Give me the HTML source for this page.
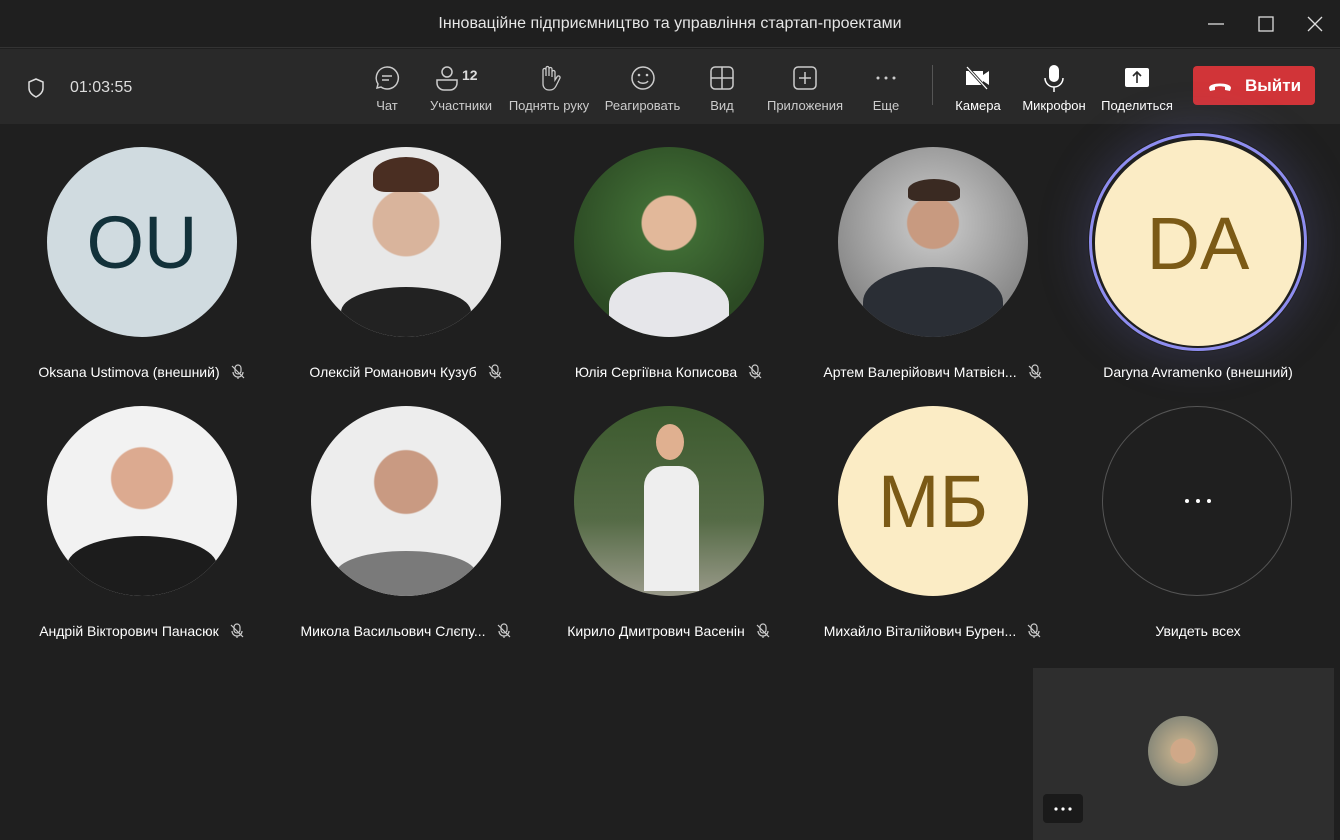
<!DOCTYPE html>
<html><head><meta charset="utf-8"><style>
*{margin:0;padding:0;box-sizing:border-box}
body{width:1340px;height:840px;background:#1f1f1f;font-family:"Liberation Sans",sans-serif;color:#fff;position:relative;overflow:hidden}
.title{position:absolute;top:0;left:0;width:1340px;height:48px;background:#1f1f1f;border-bottom:1px solid #333}
.title .t{position:absolute;left:0;right:0;top:15px;text-align:center;font-size:16px;color:#e6e6e6}
.bar{position:absolute;top:49px;left:0;width:1340px;height:75px;background:#292929}
.btn{position:absolute;top:0;height:75px;text-align:center;font-size:13px;color:#ccc}
.btn svg{position:absolute;top:15px;left:50%;transform:translateX(-50%)}
.btn span{position:absolute;top:49px;left:0;right:0;white-space:nowrap}
.w span{color:#fff}
.c{position:absolute;width:190px;height:190px;border-radius:50%;overflow:hidden}
.ini{display:flex;align-items:center;justify-content:center;font-size:74px;font-family:"Liberation Sans",sans-serif}
.n{position:absolute;width:264px;text-align:center;font-size:14px;color:#fff}
.n svg{vertical-align:-3px;margin-left:10px}
</style></head><body>
<div class="title"><div class="t">Інноваційне підприємництво та управління стартап-проектами</div>
<svg style="position:absolute;left:1207px;top:15px" width="18" height="18"><line x1="1" y1="9" x2="17" y2="9" stroke="#ddd" stroke-width="1.3"/></svg>
<svg style="position:absolute;left:1257px;top:15px" width="18" height="18"><rect x="2" y="2" width="14" height="14" fill="none" stroke="#ddd" stroke-width="1.3"/></svg>
<svg style="position:absolute;left:1306px;top:15px" width="18" height="18"><path d="M2 2L16 16M16 2L2 16" stroke="#ddd" stroke-width="1.3"/></svg>
</div>
<div class="bar">
<svg style="position:absolute;left:26px;top:28px" width="20" height="22"><path d="M10 2L3 5v6c0 4 3 7 7 9 4-2 7-5 7-9V5z" fill="none" stroke="#ddd" stroke-width="1.5"/></svg>
<div style="position:absolute;left:70px;top:30px;font-size:16px;color:#ddd">01:03:55</div>
<div class="btn" style="left:362px;width:50px"><svg width="28" height="28"><path d="M14 3a11 11 0 1 1-6 20l-4 1 1-4A11 11 0 0 1 14 3z" fill="none" stroke="#ccc" stroke-width="1.5"/><path d="M9 12h10M9 16h7" stroke="#ccc" stroke-width="1.5"/></svg><span>Чат</span></div>
<div class="btn" style="left:425px;width:72px"><svg width="50" height="28" style="left:46%"><circle cx="14" cy="8" r="5" fill="none" stroke="#ccc" stroke-width="1.5"/><path d="M4 16h20v3a7 7 0 0 1-7 7h-6a7 7 0 0 1-7-7z" fill="none" stroke="#ccc" stroke-width="1.5"/><text x="29" y="16" fill="#ddd" font-size="14" font-weight="bold" font-family="Liberation Sans">12</text></svg><span>Участники</span></div>
<div class="btn" style="left:505px;width:88px"><svg width="28" height="28"><path d="M8 14V6a1.5 1.5 0 0 1 3 0v6V4a1.5 1.5 0 0 1 3 0v8V5a1.5 1.5 0 0 1 3 0v8V8a1.5 1.5 0 0 1 3 0v8l2-3a1.5 1.5 0 0 1 3 1l-4 8c-1 2-3 4-6 4h-1c-4 0-6-3-6-6z" fill="none" stroke="#ccc" stroke-width="1.3"/></svg><span>Поднять руку</span></div>
<div class="btn" style="left:600px;width:85px"><svg width="28" height="28"><circle cx="14" cy="14" r="11" fill="none" stroke="#ccc" stroke-width="1.5"/><circle cx="10" cy="11" r="1.3" fill="#ccc"/><circle cx="18" cy="11" r="1.3" fill="#ccc"/><path d="M9 17c2 3 8 3 10 0" fill="none" stroke="#ccc" stroke-width="1.5"/></svg><span>Реагировать</span></div>
<div class="btn" style="left:702px;width:40px"><svg width="28" height="28"><rect x="3" y="3" width="22" height="22" rx="4" fill="none" stroke="#ccc" stroke-width="1.5"/><path d="M14 3v22M3 14h22" stroke="#ccc" stroke-width="1.5"/></svg><span>Вид</span></div>
<div class="btn" style="left:760px;width:90px"><svg width="28" height="28"><rect x="3" y="3" width="22" height="22" rx="4" fill="none" stroke="#ccc" stroke-width="1.5"/><path d="M14 8v12M8 14h12" stroke="#ccc" stroke-width="1.5"/></svg><span>Приложения</span></div>
<div class="btn" style="left:866px;width:40px"><svg width="28" height="28"><circle cx="6" cy="14" r="1.5" fill="#ccc"/><circle cx="14" cy="14" r="1.5" fill="#ccc"/><circle cx="22" cy="14" r="1.5" fill="#ccc"/></svg><span>Еще</span></div>
<div style="position:absolute;left:932px;top:16px;width:1px;height:40px;background:#555"></div>
<div class="btn w" style="left:950px;width:56px"><svg width="30" height="28"><path d="M3 7h17v14H3zM20 11l6-4v14l-6-4" fill="#fff"/><path d="M4 3l20 22" stroke="#292929" stroke-width="3"/><path d="M4 3l20 22" stroke="#fff" stroke-width="1.3"/></svg><span>Камера</span></div>
<div class="btn w" style="left:1017px;width:74px"><svg width="28" height="30"><rect x="9" y="1" width="10" height="17" rx="5" fill="#fff"/><path d="M5 14a9 9 0 0 0 18 0M14 23v5" fill="none" stroke="#fff" stroke-width="1.5"/></svg><span>Микрофон</span></div>
<div class="btn w" style="left:1099px;width:76px"><svg width="28" height="28"><rect x="2" y="4" width="24" height="19" rx="2" fill="#fff"/><path d="M14 19V9M10 12l4-4 4 4" fill="none" stroke="#292929" stroke-width="1.6"/></svg><span>Поделиться</span></div>
<div style="position:absolute;left:1193px;top:17px;width:122px;height:39px;background:#d13438;border-radius:4px;font-size:17px;font-weight:bold;color:#fff"><svg style="position:absolute;left:15px;top:13px" width="24" height="14"><path d="M1 9c0-6 22-6 22 0l-1 3-5-1v-3c-3-1-7-1-10 0v3l-5 1z" fill="#fff"/></svg><span style="position:absolute;left:52px;top:10px">Выйти</span></div>
</div>

<div class="c ini" style="left:47px;top:147px;background:#d0dbe0;color:#12313a">OU</div>
<div class="c" style="left:311px;top:147px;background:radial-gradient(circle at 50% 40%,#d9b49c 0 22%,#e8e8e8 23%);"><div style="position:absolute;bottom:0;left:30px;width:130px;height:50px;background:#222;border-radius:50% 50% 0 0"></div><div style="position:absolute;left:62px;top:10px;width:66px;height:35px;background:#4a2e22;border-radius:50% 50% 20% 20%"></div></div>
<div class="c" style="left:574px;top:147px;background:radial-gradient(circle at 50% 40%,#e2b89a 0 18%,#3f6b34 19%,#2c4a24 70%)"><div style="position:absolute;bottom:0;left:35px;width:120px;height:65px;background:#e6e6ea;border-radius:50% 50% 0 0"></div></div>
<div class="c" style="left:838px;top:147px;background:radial-gradient(circle at 50% 40%,#c89a80 0 17%,#bdbdbd 18%,#8a8a8a 70%)"><div style="position:absolute;bottom:0;left:25px;width:140px;height:70px;background:#2a2e35;border-radius:50% 50% 0 0"></div><div style="position:absolute;left:70px;top:32px;width:52px;height:22px;background:#3a2a22;border-radius:50% 50% 20% 20%"></div></div>
<div style="position:absolute;left:1088px;top:132px;width:220px;height:220px;border-radius:50%;box-shadow:0 0 40px 10px rgba(90,90,160,.25)"></div>
<div style="position:absolute;left:1089px;top:133px;width:218px;height:218px;border-radius:50%;border:3px solid #8e8df0;background:#1f1f1f"></div>
<div class="c ini" style="left:1095px;top:140px;width:206px;height:206px;background:#fbecc5;color:#7b5a16">DA</div>

<div class="n" style="left:10px;top:364px">Oksana Ustimova (внешний)<svg width="16" height="16"><rect x="5" y="1" width="6" height="9" rx="3" fill="none" stroke="#ccc" stroke-width="1.2"/><path d="M3 8a5 5 0 0 0 10 0M8 13v2M2 2l12 12" fill="none" stroke="#ccc" stroke-width="1.2"/></svg></div>
<div class="n" style="left:274px;top:364px">Олексій Романович Кузуб<svg width="16" height="16"><rect x="5" y="1" width="6" height="9" rx="3" fill="none" stroke="#ccc" stroke-width="1.2"/><path d="M3 8a5 5 0 0 0 10 0M8 13v2M2 2l12 12" fill="none" stroke="#ccc" stroke-width="1.2"/></svg></div>
<div class="n" style="left:537px;top:364px">Юлія Сергіївна Кописова<svg width="16" height="16"><rect x="5" y="1" width="6" height="9" rx="3" fill="none" stroke="#ccc" stroke-width="1.2"/><path d="M3 8a5 5 0 0 0 10 0M8 13v2M2 2l12 12" fill="none" stroke="#ccc" stroke-width="1.2"/></svg></div>
<div class="n" style="left:801px;top:364px">Артем Валерійович Матвієн...<svg width="16" height="16"><rect x="5" y="1" width="6" height="9" rx="3" fill="none" stroke="#ccc" stroke-width="1.2"/><path d="M3 8a5 5 0 0 0 10 0M8 13v2M2 2l12 12" fill="none" stroke="#ccc" stroke-width="1.2"/></svg></div>
<div class="n" style="left:1066px;top:364px">Daryna Avramenko (внешний)</div>

<div class="c" style="left:47px;top:406px;background:radial-gradient(circle at 50% 38%,#dcaa90 0 20%,#f2f2f2 21%)"><div style="position:absolute;bottom:0;left:20px;width:150px;height:60px;background:#1c1c1c;border-radius:50% 50% 0 0"></div></div>
<div class="c" style="left:311px;top:406px;background:radial-gradient(circle at 50% 40%,#c99a82 0 21%,#ededed 22%)"><div style="position:absolute;bottom:0;left:25px;width:140px;height:45px;background:#7a7a7a;border-radius:50% 50% 0 0"></div></div>
<div class="c" style="left:574px;top:406px;background:linear-gradient(#3c5a2e,#556b46 60%,#9a9a8a)"><div style="position:absolute;left:70px;top:60px;width:55px;height:125px;background:#eee;border-radius:20px 20px 0 0"></div><div style="position:absolute;left:82px;top:18px;width:28px;height:36px;background:#e0b090;border-radius:50%"></div></div>
<div class="c ini" style="left:838px;top:406px;background:#fbecc5;color:#7b5a16">МБ</div>
<div class="c" style="left:1102px;top:406px;border:1px solid #555;background:#1f1f1f"><svg style="position:absolute;left:80px;top:88px" width="30" height="12"><circle cx="4" cy="6" r="2" fill="#fff"/><circle cx="15" cy="6" r="2" fill="#fff"/><circle cx="26" cy="6" r="2" fill="#fff"/></svg></div>

<div class="n" style="left:10px;top:623px">Андрій Вікторович Панасюк<svg width="16" height="16"><rect x="5" y="1" width="6" height="9" rx="3" fill="none" stroke="#ccc" stroke-width="1.2"/><path d="M3 8a5 5 0 0 0 10 0M8 13v2M2 2l12 12" fill="none" stroke="#ccc" stroke-width="1.2"/></svg></div>
<div class="n" style="left:274px;top:623px">Микола Васильович Слєпу...<svg width="16" height="16"><rect x="5" y="1" width="6" height="9" rx="3" fill="none" stroke="#ccc" stroke-width="1.2"/><path d="M3 8a5 5 0 0 0 10 0M8 13v2M2 2l12 12" fill="none" stroke="#ccc" stroke-width="1.2"/></svg></div>
<div class="n" style="left:537px;top:623px">Кирило Дмитрович Васенін<svg width="16" height="16"><rect x="5" y="1" width="6" height="9" rx="3" fill="none" stroke="#ccc" stroke-width="1.2"/><path d="M3 8a5 5 0 0 0 10 0M8 13v2M2 2l12 12" fill="none" stroke="#ccc" stroke-width="1.2"/></svg></div>
<div class="n" style="left:801px;top:623px">Михайло Віталійович Бурен...<svg width="16" height="16"><rect x="5" y="1" width="6" height="9" rx="3" fill="none" stroke="#ccc" stroke-width="1.2"/><path d="M3 8a5 5 0 0 0 10 0M8 13v2M2 2l12 12" fill="none" stroke="#ccc" stroke-width="1.2"/></svg></div>
<div class="n" style="left:1066px;top:623px">Увидеть всех</div>

<div style="position:absolute;left:1033px;top:668px;width:301px;height:172px;background:#2e2e2e">
<div style="position:absolute;left:115px;top:48px;width:70px;height:70px;border-radius:50%;background:radial-gradient(circle at 50% 50%,#d0a888 0 25%,#b8a888 26%,#8a8a7a 70%)"></div>
<div style="position:absolute;left:10px;top:126px;width:40px;height:29px;background:#1a1a1a;border-radius:4px"><svg style="position:absolute;left:10px;top:12px" width="20" height="6"><circle cx="3" cy="3" r="1.6" fill="#fff"/><circle cx="10" cy="3" r="1.6" fill="#fff"/><circle cx="17" cy="3" r="1.6" fill="#fff"/></svg></div>
</div>
</body></html>
